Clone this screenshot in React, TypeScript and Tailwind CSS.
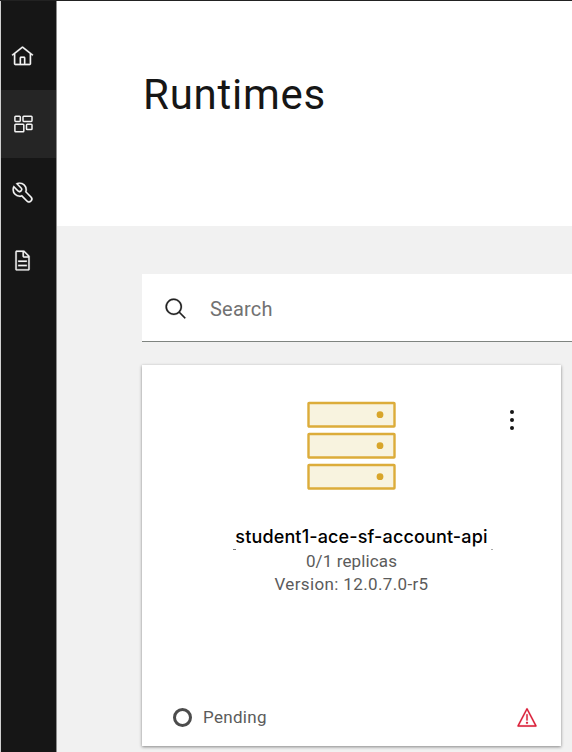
import React from 'react';

const homePath =
  'M16.612,2.2138a1.01,1.01,0,0,0-1.2427,0L1,13.4194l1.2427,1.5717L4,13.6208V26a2.0041,2.0041,0,0,0,2,2H26a2.0037,2.0037,0,0,0,2-2V13.63L29.7573,15,31,13.4282ZM18,26H14V18h4Zm2,0V18a2.0023,2.0023,0,0,0-2-2H14a2.002,2.002,0,0,0-2,2v8H6V12.0615l10-7.79,10,7.8005V26Z';
const toolsPath =
  'M12.1 2a9.8 9.8 0 0 0-5.4 1.6l6.4 6.4a2.1 2.1 0 0 1 .2 3 2.1 2.1 0 0 1-3-.2L3.7 6.4A9.84 9.84 0 0 0 2 12.1 10.14 10.14 0 0 0 12.1 22.2a10.9 10.9 0 0 0 2.6-.3l6.7 6.7a5 5 0 0 0 7.1-7.1l-6.7-6.7a10.9 10.9 0 0 0 .3-2.6A10 10 0 0 0 12.1 2Zm8 10.1a7.61 7.61 0 0 1-.3 2.1l-.3 1.1.8.8 6.7 6.7a2.88 2.88 0 0 1 .9 2.1A2.72 2.72 0 0 1 27 27a2.9 2.9 0 0 1-4.2 0l-6.7-6.7-.8-.8-1.1.3a7.61 7.61 0 0 1-2.1.3 8.27 8.27 0 0 1-5.7-2.3A7.63 7.63 0 0 1 4 12.1a8.33 8.33 0 0 1 .3-2.2l4.4 4.4a4.14 4.14 0 0 0 5.9.2 4.14 4.14 0 0 0-.2-5.9L10 4.2a6.45 6.45 0 0 1 2-.3 8.27 8.27 0 0 1 5.7 2.3A8.49 8.49 0 0 1 20.1 12.1Z';
const documentPath =
  'M25.7,9.3l-7-7C18.5,2.1,18.3,2,18,2H8C6.9,2,6,2.9,6,4v24c0,1.1,0.9,2,2,2h16c1.1,0,2-0.9,2-2V10C26,9.7,25.9,9.5,25.7,9.3z M18,4.4l5.6,5.6H18V4.4z M24,28H8V4h8v6c0,1.1,0.9,2,2,2h6V28z M10 22H22V24H10z M10 16H22V18H10z';
const searchPath =
  'M29,27.5859l-7.5521-7.5521a11.0177,11.0177,0,1,0-1.4141,1.4141L27.5859,29ZM4,13a9,9,0,1,1,9,9A9.01,9.01,0,0,1,4,13Z';
const warningPath =
  'M16,23a1.5,1.5,0,1,0,1.5,1.5A1.5,1.5,0,0,0,16,23Z M15 12H17V21H15z M29,30H3a1,1,0,0,1-.8872-1.4614l13-25a1,1,0,0,1,1.7744,0l13,25A1,1,0,0,1,29,30ZM4.6507,28H27.3493L16,6.1716Z';

function Icon({ d, className }: { d: string; className: string }) {
  return (
    <svg viewBox="0 0 32 32" fill="currentColor" stroke="currentColor" strokeWidth="0.3" className={className}>
      <path d={d} />
    </svg>
  );
}

function DashboardIcon() {
  return (
    <svg viewBox="0 0 22 22" fill="none" stroke="currentColor" strokeWidth="1.5" className="ml-px size-[22px]">
      <rect x="2.9" y="3.2" width="5.4" height="5.2" rx="0.8" />
      <rect x="11" y="3.2" width="9" height="5.2" rx="0.8" />
      <rect x="2.9" y="11.2" width="8.9" height="7.6" rx="0.8" />
      <rect x="14.5" y="11.2" width="5.5" height="5.4" rx="0.8" />
    </svg>
  );
}

function NavItem({ active = false, children }: { active?: boolean; children: React.ReactNode }) {
  return (
    <a className={`flex h-[68px] items-center pl-[10px] ${active ? 'bg-[#252525]' : ''}`}>{children}</a>
  );
}

function Sidebar() {
  return (
    <nav className="w-14 shrink-0 border-l border-[#d0d0d0] bg-[#161616] pt-[21px] text-[#f4f4f4]">
      <NavItem>
        <Icon d={homePath} className="size-[23px]" />
      </NavItem>
      <NavItem active>
        <DashboardIcon />
      </NavItem>
      <NavItem>
        <Icon d={toolsPath} className="size-[23px]" />
      </NavItem>
      <NavItem>
        <Icon d={documentPath} className="size-[23px]" />
      </NavItem>
    </nav>
  );
}

function ServerIcon() {
  return (
    <svg viewBox="0 0 90 90" className="h-[90px] w-[90px]" fill="#f8f3df" stroke="#dcac3a" strokeWidth="2.4">
      {[2, 33, 64].map((y) => (
        <g key={y}>
          <rect x="1.5" y={y} width="86" height="23.5" rx="0.6" />
          <circle cx="73" cy={y + 11.7} r="3.4" fill="#d8a52b" stroke="none" />
        </g>
      ))}
    </svg>
  );
}

function RuntimeCard() {
  return (
    <article className="relative mt-[23px] flex h-[381px] w-[419px] flex-col items-center bg-white pt-9 shadow-[0_1px_3px_rgba(0,0,0,0.45)]">
      <ServerIcon />
      <button className="absolute top-[43px] right-[45px] flex flex-col gap-[4px] p-[2px]" aria-label="Options">
        <span className="size-1 rounded-full bg-[#161616]" />
        <span className="size-1 rounded-full bg-[#161616]" />
        <span className="size-1 rounded-full bg-[#161616]" />
      </button>
      <h2 className="mt-[34px] ml-5 h-6 font-[Inter,sans-serif] text-[18px] leading-6 font-medium tracking-[0.14px] whitespace-nowrap text-black">
        student1-ace-sf-account-api
      </h2>
      <div className="ml-[91px] flex h-px w-[260px] justify-between self-start">
        <span className="w-[3px] bg-[#777]" />
        <span className="w-[2px] bg-[#aaa]" />
      </div>
      <p className="text-[17px] leading-[23px] tracking-[0.13px] text-[#5b5b5b]">0/1 replicas</p>
      <p className="text-[17px] leading-[23px] tracking-[0.36px] text-[#5b5b5b]">Version: 12.0.7.0-r5</p>
      <footer className="mt-auto mb-[17px] flex h-6 w-full items-center pr-[23px] pl-[31px]">
        <span className="size-[19px] rounded-full border-[3px] border-[#4c4c4c]" />
        <span className="mt-0.5 ml-[11px] text-[17px] tracking-[0.3px] text-[#5b5b5b]">Pending</span>
        <Icon d={warningPath} className="ml-auto size-[22px] text-[#da1e38]" />
      </footer>
    </article>
  );
}

export default function App() {
  return (
    <div className="flex h-[752px] w-[572px] overflow-hidden border-t border-[#222] bg-[#f1f1f1] font-[Roboto,sans-serif]">
      <Sidebar />
      <main className="min-w-0 flex-1 border-l border-[#8d8d8d]">
        <header className="h-[225px] bg-white pt-[66px] pl-[86px]">
          <h1 className="text-[42px] leading-14 tracking-[0.75px] text-[#161616]">Runtimes</h1>
        </header>
        <section className="pt-12 pl-[85px]">
          <div className="flex h-[68px] items-center border-b border-[#7f8480] bg-white pt-px pl-[22px]">
            <Icon d={searchPath} className="mt-px size-6 text-[#222]" />
            <span className="mt-0.5 ml-[22px] text-[20px] tracking-[0.2px] text-[#727272]">Search</span>
          </div>
          <RuntimeCard />
        </section>
      </main>
    </div>
  );
}
